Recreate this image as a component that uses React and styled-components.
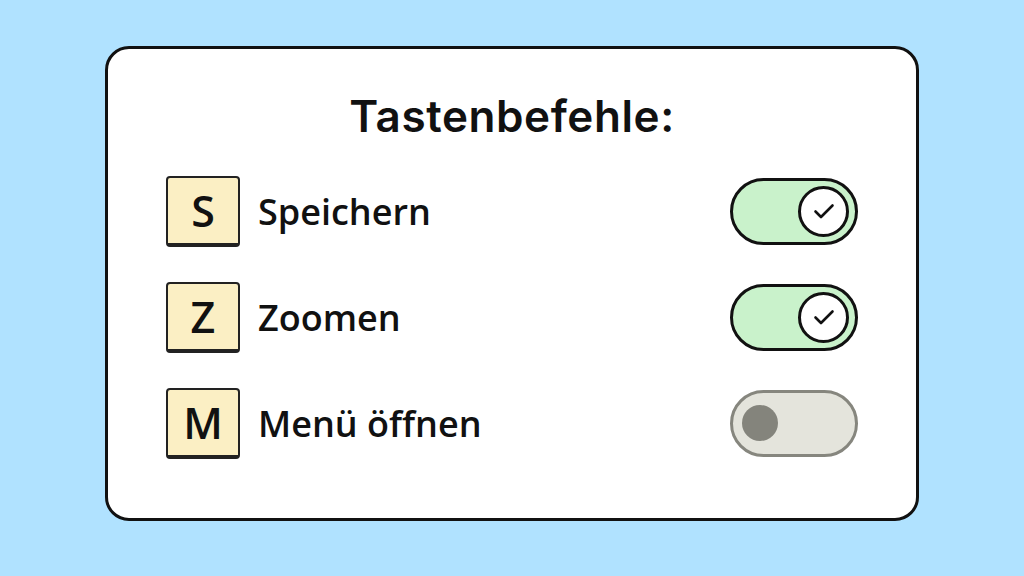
import styled, { createGlobalStyle } from 'styled-components'

const Global = createGlobalStyle`
  html, body { margin:0; padding:0; }
  body {
    background:#b0e2ff;
    font-family:"Inter","Liberation Sans",sans-serif;
  }
`

const Page = styled.div`
  width:1024px;
  height:576px;
  display:flex;
  align-items:center;
  justify-content:center;
  background:#b0e2ff;
`

const Card = styled.div`
  box-sizing:border-box;
  width:814px;
  height:475px;
  margin-top:-9px;
  background:#fff;
  border:3px solid #111;
  border-radius:24px;
  padding:42px 58px 0 58px;
  display:flex;
  flex-direction:column;
`

const Title = styled.h1`
  margin:0 0 35px;
  height:50px;
  line-height:50px;
  text-align:center;
  font-family:"Inter",sans-serif;
  font-size:44px;
  font-weight:600;
  letter-spacing:0.6px;
  color:#111;
`

const List = styled.div`
  display:flex;
  flex-direction:column;
  gap:36px;
`

const Row = styled.div`
  display:flex;
  align-items:center;
  height:70px;
`

const Key = styled.div`
  box-sizing:border-box;
  width:74px;
  height:71px;
  background:#fbefc4;
  border:2px solid #222;
  border-bottom-width:4px;
  border-radius:4px;
  display:flex;
  align-items:center;
  justify-content:center;
  font-family:"Open Sans","Noto Sans",sans-serif;
  font-size:43px;
  font-weight:600;
  color:#111;
`

const Label = styled.span`
  margin-left:18px;
  flex:1;
  font-family:"Open Sans","Noto Sans",sans-serif;
  font-size:36px;
  font-weight:600;
  color:#111;
`

const Toggle = styled.div`
  box-sizing:border-box;
  width:128px;
  height:67px;
  border-radius:34px;
  border:3px solid ${p => (p.on ? '#111' : '#86867e')};
  background:${p => (p.on ? '#c9f2cb' : '#e4e4dc')};
  display:flex;
  align-items:center;
  justify-content:${p => (p.on ? 'flex-end' : 'flex-start')};
  padding:0 ${p => (p.on ? '6px' : '9px')};
`

const Knob = styled.div`
  box-sizing:border-box;
  width:${p => (p.on ? '51px' : '36px')};
  height:${p => (p.on ? '51px' : '36px')};
  border-radius:50%;
  background:${p => (p.on ? '#fff' : '#84847c')};
  border:${p => (p.on ? '3px solid #111' : 'none')};
  display:flex;
  align-items:center;
  justify-content:center;
`

const Check = () => (
  <svg width="24" height="24" viewBox="0 0 24 24" fill="none" stroke="#111" strokeWidth="2.6" strokeLinecap="round" strokeLinejoin="round">
    <path d="M3.5 12.5l5.5 5.5L20.5 6.5" />
  </svg>
)

const items = [
  { k: 'S', label: 'Speichern', on: true },
  { k: 'Z', label: 'Zoomen', on: true },
  { k: 'M', label: 'Menü öffnen', on: false },
]

export default function App() {
  return (
    <Page>
      <Global />
      <Card>
        <Title>Tastenbefehle:</Title>
        <List>
          {items.map(it => (
            <Row key={it.k}>
              <Key>{it.k}</Key>
              <Label>{it.label}</Label>
              <Toggle on={it.on}>
                <Knob on={it.on}>{it.on && <Check />}</Knob>
              </Toggle>
            </Row>
          ))}
        </List>
      </Card>
    </Page>
  )
}
